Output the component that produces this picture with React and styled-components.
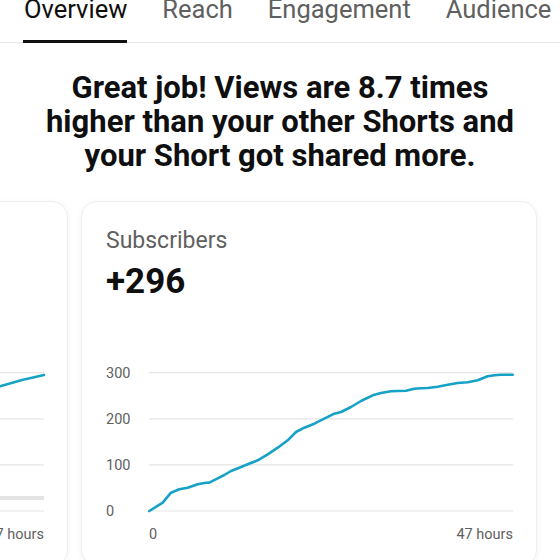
import React from "react";
import styled, { createGlobalStyle } from "styled-components";

const GlobalStyle = createGlobalStyle`
  html, body {
    margin: 0;
    padding: 0;
    background: #ffffff;
    overflow: hidden;
    width: 560px;
    height: 560px;
  }
  body {
    font-family: Roboto, "Noto Sans", "Liberation Sans", sans-serif;
    color: #0f0f0f;
  }
`;

const Page = styled.div`
  width: 560px;
  height: 560px;
  overflow: hidden;
  display: flex;
  flex-direction: column;
`;

const TabBar = styled.nav`
  display: flex;
  gap: 35px;
  margin-top: -6px;
  padding-left: 24px;
  border-bottom: 1px solid #e6e6e6;
  flex-shrink: 0;
`;

const Tab = styled.div`
  position: relative;
  flex-shrink: 0;
  white-space: nowrap;
  font-size: 25.5px;
  line-height: 30px;
  padding-bottom: 18px;
  color: ${(p) => (p.$active ? "#0f0f0f" : "#606060")};
`;

const Underline = styled.span`
  position: absolute;
  left: -1px;
  right: 0;
  bottom: -1px;
  height: 3px;
  background: #0f0f0f;
`;

const Headline = styled.h1`
  margin: 28px auto 0;
  max-width: 500px;
  text-align: center;
  font-size: 31px;
  line-height: 34px;
  font-weight: 700;
  color: #0f0f0f;
`;

const Track = styled.div`
  display: flex;
  gap: 13px;
  margin-top: 28px;
  margin-left: -388px;
`;

const Card = styled.section`
  flex-shrink: 0;
  width: 456px;
  height: 365px;
  box-sizing: border-box;
  padding: 25px 24px 0;
  background: #ffffff;
  border: 1px solid #efefef;
  border-radius: 16px;
  box-shadow: 0 1px 6px rgba(0, 0, 0, 0.05);
  display: flex;
  flex-direction: column;
`;

const CardTitle = styled.div`
  font-size: 23px;
  line-height: 28px;
  color: #606060;
`;

const CardValue = styled.div`
  margin-top: 6px;
  font-size: 35px;
  line-height: 42px;
  font-weight: 700;
  color: #0f0f0f;
`;

const ChartSvg = styled.svg`
  display: block;
  margin-top: 50px;
  overflow: visible;
`;

const AxisText = styled.text`
  font-family: Roboto, "Noto Sans", sans-serif;
  font-size: 14.5px;
  fill: #606060;
`;

const GRID = [
  { label: "300", y: 19.7 },
  { label: "200", y: 65.8 },
  { label: "100", y: 111.9 },
  { label: "0", y: 158 },
];

const X0 = 43;
const X1 = 407;

function Chart({ points, band }) {
  const d = points.map((p, i) => `${i ? "L" : "M"}${p[0]} ${p[1]}`).join(" ");
  return (
    <ChartSvg width="408" height="200" viewBox="0 0 408 200">
      {GRID.map((g) => (
        <g key={g.label}>
          <line x1={X0} x2={X1} y1={g.y} y2={g.y} stroke="#e5e5e5" strokeWidth="1.2" />
          <AxisText x="0" y={g.y + 5}>
            {g.label}
          </AxisText>
        </g>
      ))}
      {band && <rect x={X0} y={143} width={X1 - X0} height={4} fill="#e3e3e3" />}
      <path d={d} fill="none" stroke="#16a2c6" strokeWidth="2.6" strokeLinejoin="round" strokeLinecap="round" />
      <AxisText x={X0} y="186">
        0
      </AxisText>
      <AxisText x={X1} y="186" textAnchor="end">
        47 hours
      </AxisText>
    </ChartSvg>
  );
}

const SUBS = [
  [43.3, 158], [56.7, 149.7], [65, 139.7], [73.3, 136.3], [81.7, 134.7], [91.7, 131.3],
  [100, 129.7], [103.3, 129.7], [111.7, 125.3], [118.3, 122], [125, 118], [133.3, 114.7],
  [141.7, 111.3], [151.7, 107.3], [161.7, 101.3], [171.7, 94.7], [181.7, 87.3], [190, 79],
  [198.3, 74.7], [208.3, 70.7], [218.3, 65.7], [228.3, 60.7], [235, 59], [245, 54],
  [255, 48], [266.7, 42.3], [275, 40], [285, 38.3], [291.7, 38], [300, 37.7],
  [308.3, 35.7], [315, 35.3], [321.7, 35], [331.7, 33.7], [341.7, 31.7], [351.7, 30],
  [361.7, 29.3], [371.7, 27.3], [381.7, 23.3], [388.3, 22.3], [395, 21.7], [406.7, 21.7],
];

const VIEWS = [
  [43, 158], [60, 140], [80, 122], [100, 108], [130, 92], [160, 80], [190, 70],
  [220, 62], [250, 55], [280, 49], [310, 44], [340, 38.5], [364, 33], [385, 27], [407, 22],
];

export default function App() {
  return (
    <Page>
      <GlobalStyle />
      <TabBar>
        <Tab $active>
          Overview
          <Underline />
        </Tab>
        <Tab>Reach</Tab>
        <Tab>Engagement</Tab>
        <Tab>Audience</Tab>
      </TabBar>
      <Headline>
        Great job! Views are 8.7 times higher than your other Shorts and your Short got shared more.
      </Headline>
      <Track>
        <Card>
          <CardTitle>Views</CardTitle>
          <CardValue>12.4K</CardValue>
          <Chart points={VIEWS} band />
        </Card>
        <Card>
          <CardTitle>Subscribers</CardTitle>
          <CardValue>+296</CardValue>
          <Chart points={SUBS} />
        </Card>
      </Track>
    </Page>
  );
}
